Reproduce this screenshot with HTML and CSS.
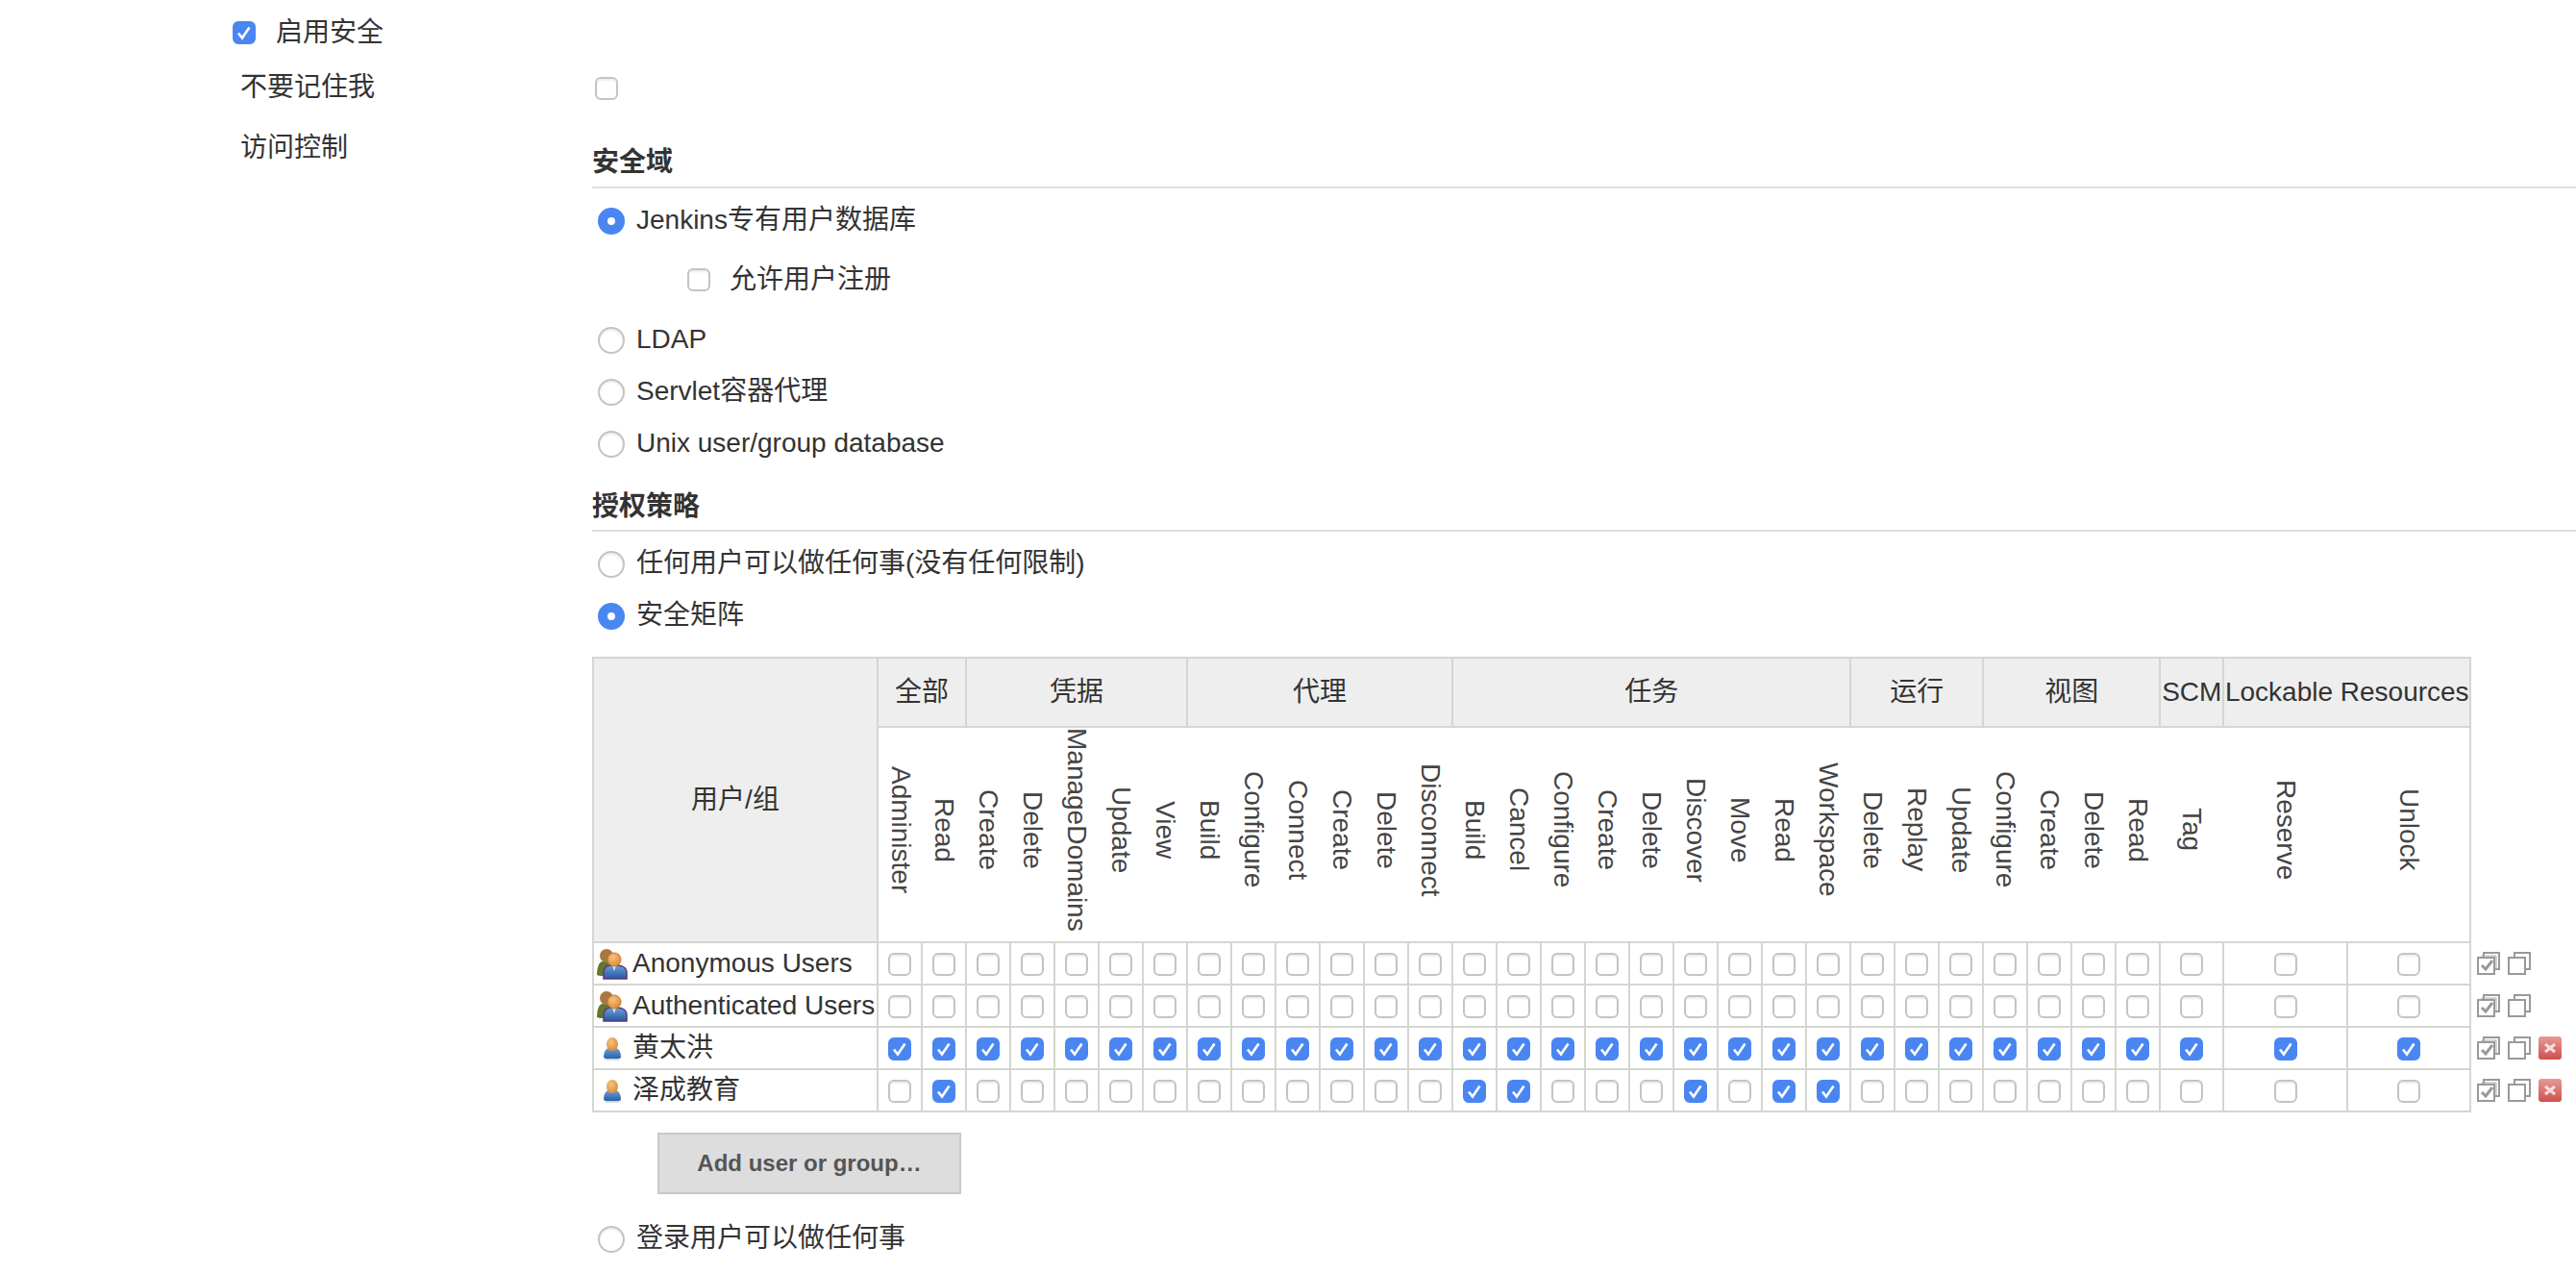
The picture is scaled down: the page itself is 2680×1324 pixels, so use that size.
FILE: index.html
```html
<!DOCTYPE html>
<html lang="zh-CN">
<head>
  <meta charset="UTF-8">
  <title>Configure Global Security</title>
  <meta name="viewport" content="width=device-width, initial-scale=1">
  <link rel="stylesheet" href="styles.css">
</head>
<body>
  <svg class="sprites" aria-hidden="true">
    <defs>
      <linearGradient id="blue" x1="0" y1="0" x2="0" y2="1">
        <stop offset="0" stop-color="#6f9fd6"/>
        <stop offset="1" stop-color="#1f5aa6"/>
      </linearGradient>
      <radialGradient id="skin" cx="0.4" cy="0.35" r="0.7">
        <stop offset="0" stop-color="#f7c27c"/>
        <stop offset="1" stop-color="#d98a35"/>
      </radialGradient>
      <linearGradient id="red" x1="0" y1="0" x2="0" y2="1">
        <stop offset="0" stop-color="#e79a97"/>
        <stop offset="1" stop-color="#cf4f4c"/>
      </linearGradient>
    </defs>
    <symbol id="i-group" viewBox="0 0 32 32">
      <path d="M0 27c0-7 2-14 6-14h9v15H3z" fill="#66752f"/>
      <circle cx="10" cy="7" r="7" fill="#a8773f"/>
      <path d="M7 31v-6c0-5 3-8 8-8h6c6 0 10 3 10 8v6z" fill="url(#blue)" stroke="#5b3a78" stroke-width="1.5"/>
      <path d="M16 17l2 6 2-6z" fill="#e4edf7"/>
      <circle cx="18" cy="11" r="7" fill="url(#skin)" stroke="#c9782c"/>
    </symbol>
    <symbol id="i-user" viewBox="0 0 20 24">
      <path d="M1 21c0-7 3-10 6-10h6c3 0 6 3 6 10-5 3-13 3-18 0z" fill="url(#blue)"/>
      <ellipse cx="10" cy="7" rx="6" ry="7" fill="url(#skin)"/>
      <ellipse cx="10" cy="23" rx="9" ry="1" fill="#ddd"/>
    </symbol>
    <symbol id="i-all" viewBox="0 0 24 24">
      <path d="M7 5V1h16v17h-5" fill="none" stroke="#999" stroke-width="2"/>
      <path d="M5 6v-2h15v14" fill="none" stroke="#aaa" stroke-width="1"/>
      <rect x="1" y="6" width="17" height="17" fill="#fff" stroke="#999" stroke-width="2"/>
      <path d="M5 14l4 4 7-9" fill="none" stroke="#999" stroke-width="3"/>
    </symbol>
    <symbol id="i-none" viewBox="0 0 24 24">
      <path d="M7 5V1h16v17h-5" fill="none" stroke="#999" stroke-width="2"/>
      <rect x="1" y="6" width="17" height="17" fill="#fff" stroke="#999" stroke-width="2"/>
    </symbol>
    <symbol id="i-remove" viewBox="0 0 24 24">
      <rect width="24" height="24" rx="3" fill="url(#red)"/>
      <path d="M7 8l10 8M17 8L7 16" stroke="#f6dedd" stroke-width="3"/>
    </symbol>
  </svg>

  <div class="enable-row">
    <input type="checkbox" checked>
    <span>启用安全</span>
  </div>

  <div class="form-row remember-row">
    <div class="form-label">不要记住我</div>
    <div><input type="checkbox"></div>
  </div>

  <div class="form-row">
    <div class="form-label access-label">访问控制</div>
    <div class="form-body">
      <h3 class="section-head">安全域</h3>
      <div class="options">
        <label class="option"><input type="radio" name="realm" checked>Jenkins专有用户数据库</label>
        <label class="sub-option"><input type="checkbox">允许用户注册</label>
        <label class="option"><input type="radio" name="realm">LDAP</label>
        <label class="option"><input type="radio" name="realm">Servlet容器代理</label>
        <label class="option"><input type="radio" name="realm">Unix user/group database</label>
      </div>

      <h3 class="section-head second">授权策略</h3>
      <div class="options">
        <label class="option"><input type="radio" name="auth">任何用户可以做任何事(没有任何限制)</label>
        <label class="option"><input type="radio" name="auth" checked>安全矩阵</label>
      </div>

      <div class="matrix-row">
        <table class="matrix">
          <colgroup>
            <col class="col-user">
            <col class="col-p"><col class="col-p">
            <col class="col-p"><col class="col-p"><col class="col-p"><col class="col-p"><col class="col-p">
            <col class="col-p"><col class="col-p"><col class="col-p"><col class="col-p"><col class="col-p"><col class="col-p">
            <col class="col-p"><col class="col-p"><col class="col-p"><col class="col-p"><col class="col-p"><col class="col-p"><col class="col-p"><col class="col-p"><col class="col-p">
            <col class="col-p"><col class="col-p"><col class="col-p">
            <col class="col-p"><col class="col-p"><col class="col-p"><col class="col-p">
            <col class="col-scm">
            <col class="col-lock"><col class="col-lock">
          </colgroup>
          <thead>
            <tr class="group-head">
              <th rowspan="2">用户/组</th>
              <th colspan="2">全部</th>
              <th colspan="5">凭据</th>
              <th colspan="6">代理</th>
              <th colspan="9">任务</th>
              <th colspan="3">运行</th>
              <th colspan="4">视图</th>
              <th>SCM</th>
              <th colspan="2">Lockable Resources</th>
            </tr>
            <tr class="perm-head">
              <th><span>Administer</span></th><th><span>Read</span></th>
              <th><span>Create</span></th><th><span>Delete</span></th><th><span>ManageDomains</span></th><th><span>Update</span></th><th><span>View</span></th>
              <th><span>Build</span></th><th><span>Configure</span></th><th><span>Connect</span></th><th><span>Create</span></th><th><span>Delete</span></th><th><span>Disconnect</span></th>
              <th><span>Build</span></th><th><span>Cancel</span></th><th><span>Configure</span></th><th><span>Create</span></th><th><span>Delete</span></th><th><span>Discover</span></th><th><span>Move</span></th><th><span>Read</span></th><th><span>Workspace</span></th>
              <th><span>Delete</span></th><th><span>Replay</span></th><th><span>Update</span></th>
              <th><span>Configure</span></th><th><span>Create</span></th><th><span>Delete</span></th><th><span>Read</span></th>
              <th><span>Tag</span></th>
              <th><span>Reserve</span></th><th><span>Unlock</span></th>
            </tr>
          </thead>
          <tbody>
            <tr>
              <td class="who"><div><svg class="who-icon"><use href="#i-group"/></svg>Anonymous Users</div></td>
              <td><input type="checkbox"></td><td><input type="checkbox"></td>
              <td><input type="checkbox"></td><td><input type="checkbox"></td><td><input type="checkbox"></td><td><input type="checkbox"></td><td><input type="checkbox"></td>
              <td><input type="checkbox"></td><td><input type="checkbox"></td><td><input type="checkbox"></td><td><input type="checkbox"></td><td><input type="checkbox"></td><td><input type="checkbox"></td>
              <td><input type="checkbox"></td><td><input type="checkbox"></td><td><input type="checkbox"></td><td><input type="checkbox"></td><td><input type="checkbox"></td><td><input type="checkbox"></td><td><input type="checkbox"></td><td><input type="checkbox"></td><td><input type="checkbox"></td>
              <td><input type="checkbox"></td><td><input type="checkbox"></td><td><input type="checkbox"></td>
              <td><input type="checkbox"></td><td><input type="checkbox"></td><td><input type="checkbox"></td><td><input type="checkbox"></td>
              <td><input type="checkbox"></td>
              <td><input type="checkbox"></td><td><input type="checkbox"></td>
            </tr>
            <tr>
              <td class="who"><div><svg class="who-icon"><use href="#i-group"/></svg>Authenticated Users</div></td>
              <td><input type="checkbox"></td><td><input type="checkbox"></td>
              <td><input type="checkbox"></td><td><input type="checkbox"></td><td><input type="checkbox"></td><td><input type="checkbox"></td><td><input type="checkbox"></td>
              <td><input type="checkbox"></td><td><input type="checkbox"></td><td><input type="checkbox"></td><td><input type="checkbox"></td><td><input type="checkbox"></td><td><input type="checkbox"></td>
              <td><input type="checkbox"></td><td><input type="checkbox"></td><td><input type="checkbox"></td><td><input type="checkbox"></td><td><input type="checkbox"></td><td><input type="checkbox"></td><td><input type="checkbox"></td><td><input type="checkbox"></td><td><input type="checkbox"></td>
              <td><input type="checkbox"></td><td><input type="checkbox"></td><td><input type="checkbox"></td>
              <td><input type="checkbox"></td><td><input type="checkbox"></td><td><input type="checkbox"></td><td><input type="checkbox"></td>
              <td><input type="checkbox"></td>
              <td><input type="checkbox"></td><td><input type="checkbox"></td>
            </tr>
            <tr>
              <td class="who"><div><svg class="who-icon user"><use href="#i-user"/></svg>黄太洪</div></td>
              <td><input type="checkbox" checked></td><td><input type="checkbox" checked></td>
              <td><input type="checkbox" checked></td><td><input type="checkbox" checked></td><td><input type="checkbox" checked></td><td><input type="checkbox" checked></td><td><input type="checkbox" checked></td>
              <td><input type="checkbox" checked></td><td><input type="checkbox" checked></td><td><input type="checkbox" checked></td><td><input type="checkbox" checked></td><td><input type="checkbox" checked></td><td><input type="checkbox" checked></td>
              <td><input type="checkbox" checked></td><td><input type="checkbox" checked></td><td><input type="checkbox" checked></td><td><input type="checkbox" checked></td><td><input type="checkbox" checked></td><td><input type="checkbox" checked></td><td><input type="checkbox" checked></td><td><input type="checkbox" checked></td><td><input type="checkbox" checked></td>
              <td><input type="checkbox" checked></td><td><input type="checkbox" checked></td><td><input type="checkbox" checked></td>
              <td><input type="checkbox" checked></td><td><input type="checkbox" checked></td><td><input type="checkbox" checked></td><td><input type="checkbox" checked></td>
              <td><input type="checkbox" checked></td>
              <td><input type="checkbox" checked></td><td><input type="checkbox" checked></td>
            </tr>
            <tr>
              <td class="who"><div><svg class="who-icon user"><use href="#i-user"/></svg>泽成教育</div></td>
              <td><input type="checkbox"></td><td><input type="checkbox" checked></td>
              <td><input type="checkbox"></td><td><input type="checkbox"></td><td><input type="checkbox"></td><td><input type="checkbox"></td><td><input type="checkbox"></td>
              <td><input type="checkbox"></td><td><input type="checkbox"></td><td><input type="checkbox"></td><td><input type="checkbox"></td><td><input type="checkbox"></td><td><input type="checkbox"></td>
              <td><input type="checkbox" checked></td><td><input type="checkbox" checked></td><td><input type="checkbox"></td><td><input type="checkbox"></td><td><input type="checkbox"></td><td><input type="checkbox" checked></td><td><input type="checkbox"></td><td><input type="checkbox" checked></td><td><input type="checkbox" checked></td>
              <td><input type="checkbox"></td><td><input type="checkbox"></td><td><input type="checkbox"></td>
              <td><input type="checkbox"></td><td><input type="checkbox"></td><td><input type="checkbox"></td><td><input type="checkbox"></td>
              <td><input type="checkbox"></td>
              <td><input type="checkbox"></td><td><input type="checkbox"></td>
            </tr>
          </tbody>
        </table>

        <div class="row-actions">
          <div class="actions"><svg class="act"><use href="#i-all"/></svg><svg class="act"><use href="#i-none"/></svg></div>
          <div class="actions"><svg class="act"><use href="#i-all"/></svg><svg class="act"><use href="#i-none"/></svg></div>
          <div class="actions"><svg class="act"><use href="#i-all"/></svg><svg class="act"><use href="#i-none"/></svg><svg class="act"><use href="#i-remove"/></svg></div>
          <div class="actions"><svg class="act"><use href="#i-all"/></svg><svg class="act"><use href="#i-none"/></svg><svg class="act"><use href="#i-remove"/></svg></div>
        </div>
      </div>

      <button class="add-btn" type="button">Add user or group…</button>

      <div class="options last">
        <label class="option"><input type="radio" name="auth">登录用户可以做任何事</label>
      </div>
    </div>
  </div>
</body>
</html>
```

FILE: styles.css
```css
body {
  margin: 0;
  background-color: #fff;
  color: #333;
  font-family: "Liberation Sans", "Noto Sans CJK SC", sans-serif;
  font-size: 28px;
  line-height: 36px;
  overflow: hidden;
}
.sprites {
  position: absolute;
  width: 0;
  height: 0;
}

input[type="checkbox"],
input[type="radio"] {
  appearance: none;
  display: block;
  flex: none;
  margin: 0;
  background-color: #fff;
  box-shadow: inset 0 2px 2px #eee;
}
input[type="checkbox"] {
  width: 24px;
  height: 24px;
  border: 2px solid #c4c4c4;
  border-radius: 6px;
}
input[type="radio"] {
  width: 28px;
  height: 28px;
  border: 2px solid #c4c4c4;
  border-radius: 50%;
}
input[type="checkbox"]:checked {
  border-color: #4a86f2;
  background-color: #4a86f2;
  box-shadow: none;
  background-image: url("data:image/svg+xml,%3Csvg xmlns='http://www.w3.org/2000/svg' viewBox='0 0 24 24'%3E%3Cpath d='M6 12.5l4 5 7.5-11' fill='none' stroke='%23fff' stroke-width='2.6'/%3E%3C/svg%3E");
  background-size: 24px 24px;
  background-position: center;
}
input[type="radio"]:checked {
  border: 10px solid #4a86f2;
  box-shadow: none;
}

.enable-row {
  display: flex;
  align-items: center;
  height: 36px;
  padding: 16px 0 0 242px;
}
.enable-row span {
  margin-left: 21px;
}

.form-row {
  display: grid;
  grid-template-columns: 616px 1fr;
}
.remember-row {
  margin-top: 22px;
  margin-bottom: 24px;
}
.remember-row input {
  margin: 6px 0 0 3px;
}
.form-label {
  padding-left: 250px;
  margin-top: -1px;
}
.access-label {
  margin-top: 3px;
}

.section-head {
  margin: 0;
  padding: 18px 0 7px;
  font-size: 28px;
  font-weight: bold;
  border-bottom: 2px solid #ddd;
}
.section-head.second {
  margin-top: 3px;
  padding-bottom: 6px;
}
.options {
  margin-top: 6px;
}
.options.last {
  margin-top: 19px;
}
.option {
  display: flex;
  align-items: center;
  height: 54px;
  padding-left: 6px;
}
.option input {
  margin-right: 12px;
  position: relative;
  top: 1px;
}
.sub-option {
  display: flex;
  align-items: center;
  height: 70px;
  padding-left: 99px;
}
.sub-option input {
  margin-right: 20px;
}

.matrix-row {
  display: flex;
  margin-top: 16px;
}
.matrix {
  table-layout: fixed;
  width: 1954px;
  border-collapse: collapse;
  border: 2px solid #d3d7cf;
}
.col-user { width: 296px; }
.col-p { width: 46px; }
.col-scm { width: 66px; }
.col-lock { width: 128.5px; }

.matrix th,
.matrix td {
  padding: 0;
  border: 2px solid #d3d7cf;
  font-weight: normal;
  text-align: center;
  overflow: visible;
  white-space: nowrap;
}
.group-head th {
  height: 70px;
  background-color: #eee;
}
.matrix .perm-head th {
  height: 212px;
  padding-bottom: 10px;
  border-left: none;
  border-right: none;
  color: #444;
}
.perm-head span {
  display: block;
  width: 36px;
  margin: 0 auto;
  writing-mode: vertical-rl;
}
.matrix td {
  height: 42px;
}
.matrix td input {
  margin: 1px auto 0;
}
.matrix .who {
  text-align: left;
}
.who div {
  display: flex;
  align-items: center;
}
.who-icon {
  flex: none;
  width: 32px;
  height: 32px;
  margin: 1px 5px 0 3px;
  filter: blur(0.5px);
}
.who-icon.user {
  width: 20px;
  height: 24px;
  margin: 2px 11px 0 9px;
}

.row-actions {
  padding-top: 297px;
  margin-left: 6px;
}
.actions {
  display: flex;
  gap: 8px;
  height: 44px;
  align-items: center;
}
.act {
  width: 24px;
  height: 24px;
  filter: blur(0.4px);
}

.add-btn {
  display: block;
  width: 316px;
  height: 64px;
  margin: 21px 0 0 68px;
  padding: 0;
  background-color: #ddd;
  color: #555;
  border: 2px solid #c8c8c8;
  font-family: inherit;
  font-size: 24px;
  font-weight: bold;
  cursor: pointer;
}
```
